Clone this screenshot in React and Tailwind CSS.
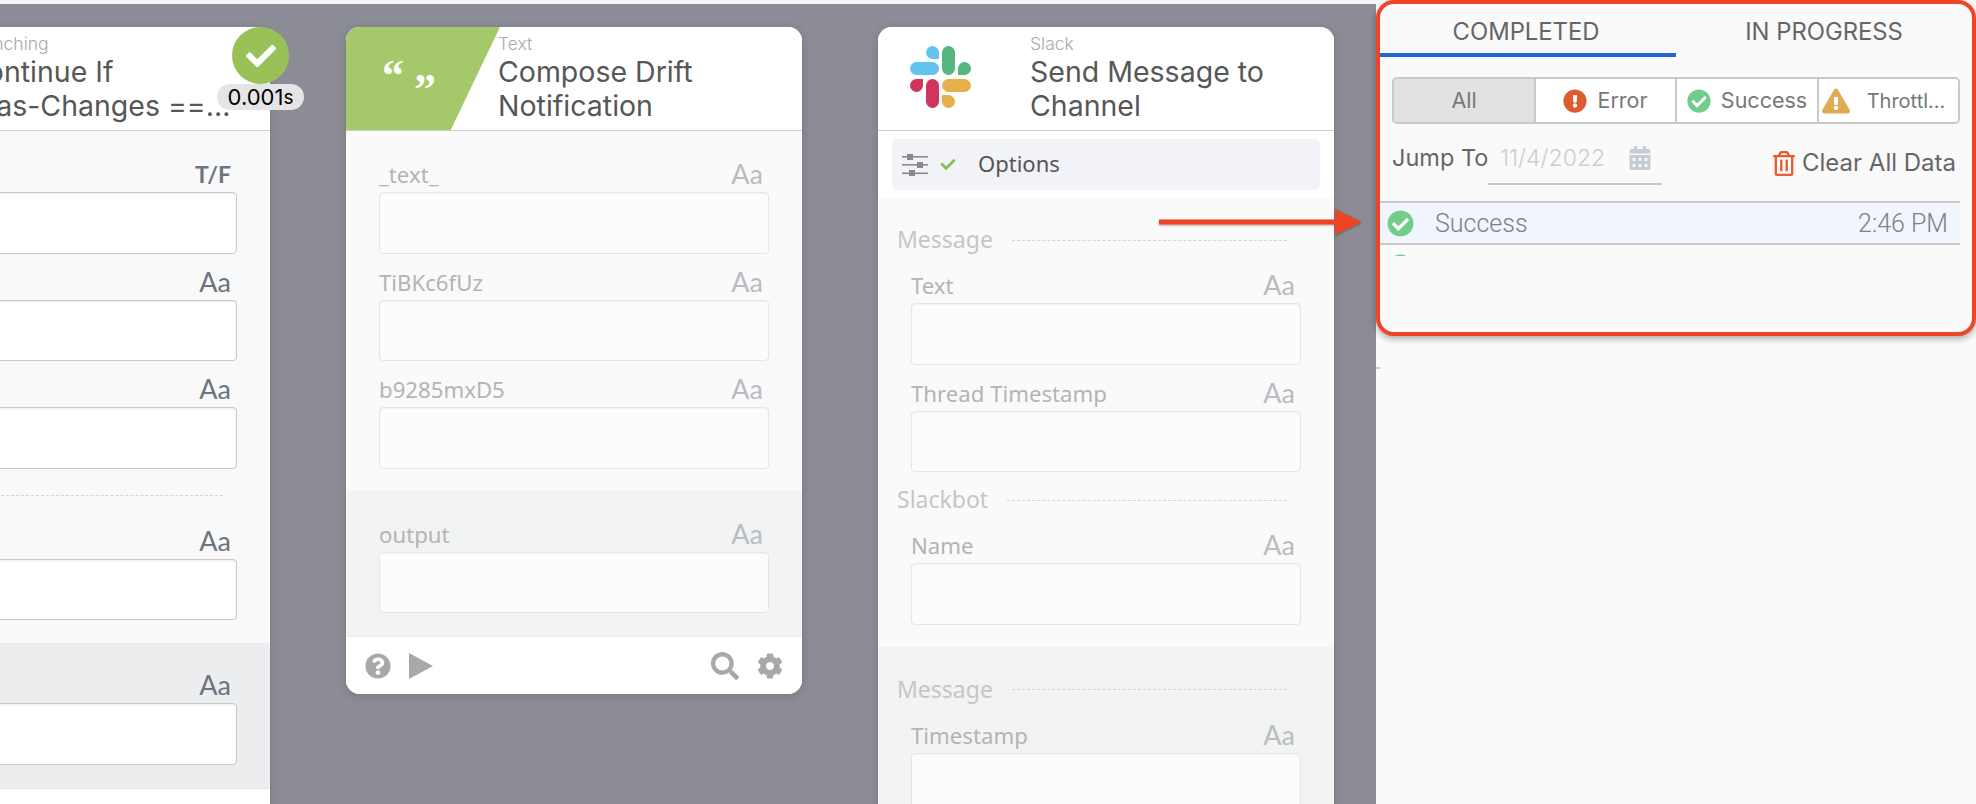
import React from 'react';
import { FaCheck, FaCog, FaQuestionCircle, FaSearch, FaCalendarAlt, FaRegTrashAlt, FaCheckCircle, FaExclamationCircle, FaExclamationTriangle } from 'react-icons/fa';

function Field({ label, type = 'Aa', faded }) {
  return (
    <div className="px-[33px]">
      <div className="h-[46px] flex items-end justify-between pb-[4px] pr-[6px]">
        <span className={faded ? "mb-[1px] font-['Noto_Sans'] text-[22.2px] leading-[24px] text-[#b4b4b4]" : "mb-[1px] font-['Noto_Sans'] text-[22.2px] leading-[24px] text-[#6b7580]"}>{label}</span>
        {type === 'Aa' ? (
          <span className={faded ? "font-['Lato'] text-[27px] leading-[28px] text-[#b9bcc2]" : "font-['Lato'] text-[27px] leading-[28px] text-[#6b7580]"}>Aa</span>
        ) : (
          <span className="font-['Lato'] font-bold text-[23px] leading-[28px] text-[#6b7580]">{type}</span>
        )}
      </div>
      <div className={faded
        ? 'h-[61.5px] rounded-[4px] border border-[#e6e6e6] bg-[#fcfcfc] shadow-[inset_0_1px_2px_rgba(0,0,0,0.04)]'
        : 'h-[61.5px] rounded-[4px] border border-[#c8c8c8] bg-white shadow-[inset_0_1px_2px_rgba(0,0,0,0.08)]'} />
    </div>
  );
}

function SectionHead({ label, className }) {
  return (
    <div className={`h-[34px] flex items-center pl-[19px] pr-[47px] gap-[19px] ${className}`}>
      <span className="-mt-[2px] font-['Noto_Sans'] text-[23px] leading-[30px] text-[#c6c6c6]">{label}</span>
      <div className="flex-1 border-t border-dashed border-[#d4d4d4]" />
    </div>
  );
}

function NodeHeader({ icon, category, title }) {
  return (
    <div className="h-[104px] flex border-b border-[#cfcfcf] bg-white shrink-0">
      <div className="w-[152px] h-full shrink-0">{icon}</div>
      <div className="pt-[7px] min-w-0">
        <div className="text-[17.5px] leading-[20px] font-light text-[#a9a9a9]">{category}</div>
        <div className="mt-[1px] text-[28.5px] leading-[34px] text-[#575757] whitespace-pre">{title}</div>
      </div>
    </div>
  );
}

function SlackLogo() {
  return (
    <svg viewBox="0 0 61 62" className="w-[61px] h-[62px] ml-[32px] mt-[19px]">
      <path d="M22.5 0a6.5 6.5 0 0 0 0 13H29V6.5A6.5 6.5 0 0 0 22.5 0z" fill="#62c3ec" />
      <rect x="0" y="16" width="29" height="13" rx="6.5" fill="#62c3ec" />
      <rect x="32" y="0" width="13" height="29" rx="6.5" fill="#57b582" />
      <path d="M54.5 16a6.5 6.5 0 0 1 0 13H48v-6.5a6.5 6.5 0 0 1 6.5-6.5z" fill="#57b582" />
      <path d="M6.5 33H13v6.5a6.5 6.5 0 0 1-13 0A6.5 6.5 0 0 1 6.5 33z" fill="#cf355d" />
      <rect x="16" y="33" width="13" height="29" rx="6.5" fill="#cf355d" />
      <rect x="32" y="33" width="29" height="13" rx="6.5" fill="#e6b14a" />
      <path d="M32 49h6.5a6.5 6.5 0 0 1 0 13A6.5 6.5 0 0 1 32 55.5z" fill="#e6b14a" />
    </svg>
  );
}

function SlidersIcon() {
  return (
    <svg viewBox="0 0 26 22" className="w-[26px] h-[22px]" fill="#8a8a8a">
      <rect x="0" y="2" width="26" height="1.6" />
      <rect x="5" y="0" width="6" height="6" />
      <rect x="0" y="10" width="26" height="1.6" />
      <rect x="15" y="8" width="6" height="6" />
      <rect x="0" y="18.5" width="26" height="1.6" />
      <rect x="7" y="16" width="6" height="6" />
    </svg>
  );
}

function BranchCard() {
  return (
    <div className="w-[456px] -ml-[186px] shrink-0 rounded-t-[14px] overflow-hidden bg-[#f9f9f9] shadow-[0_2px_10px_rgba(0,0,0,0.15)]">
      <NodeHeader
        category="Branching"
        title={<>Continue If{'\n'}<span className="ml-[9px]">Has-Changes ==...</span></>}
      />
      <div className="pt-[15px] pb-[23px]">
        <Field type="T/F" />
        <Field />
        <Field />
        <SectionHead className="mt-[10px]" />
        <Field />
      </div>
      <div className="bg-[#ecedef] pt-[14px] pb-[23px] border-b border-[#e6e6e6]">
        <Field />
      </div>
      <div className="h-[60px] bg-white" />
    </div>
  );
}

function TextCard() {
  return (
    <div className="w-[456px] self-start shrink-0 rounded-[14px] overflow-hidden bg-[#fafafa] shadow-[0_2px_10px_rgba(0,0,0,0.15)]">
      <NodeHeader
        category="Text"
        title={'Compose Drift\nNotification'}
        icon={
          <div className="w-[154px] h-full bg-[#a5c86a] [clip-path:polygon(0_0,100%_0,68%_100%,0_100%)] flex text-white font-['Liberation_Serif'] font-bold text-[44px] leading-[44px] pl-[36px] gap-[10px] pt-[27px]">
            <span>“</span>
            <span className="mt-[14px]">”</span>
          </div>
        }
      />
      <div className="pt-[15px] pb-[22px]">
        <Field faded label="_text_" />
        <Field faded label="TiBKc6fUz" />
        <Field faded label="b9285mxD5" />
      </div>
      <div className="bg-[#f2f3f3] pt-[15px] pb-[23px] border-b border-[#ececec]">
        <Field faded label="output" />
      </div>
      <div className="h-[57px] bg-white flex items-center px-[19px] text-[#a8a8a8]">
        <FaQuestionCircle className="w-[26px] h-[26px]" />
        <svg viewBox="0 0 24 26" className="w-[24px] h-[26px] ml-[18px]" fill="#a8a8a8"><polygon points="0,0 24,13 0,26" /></svg>
        <div className="flex-1" />
        <FaSearch className="w-[28px] h-[28px]" />
        <FaCog className="w-[26px] h-[26px] ml-[18px]" />
      </div>
    </div>
  );
}

function SlackCard() {
  return (
    <div className="w-[456px] shrink-0 rounded-t-[14px] overflow-hidden bg-[#fafafa] shadow-[0_2px_10px_rgba(0,0,0,0.15)]">
      <NodeHeader category="Slack" title={'Send Message to\nChannel'} icon={<SlackLogo />} />
      <div className="bg-white h-[67px] px-[14px] pt-[8px]">
        <div className="h-[51px] rounded-[5px] bg-[#f1f3f8] flex items-center pl-[10px]">
          <SlidersIcon />
          <FaCheck className="w-[18px] h-[15px] ml-[11px] text-[#8cc152]" />
          <span className="ml-[21px] -mt-[2px] font-['Noto_Sans'] text-[22px] text-[#555555]">Options</span>
        </div>
      </div>
      <div className="pt-[25px] pb-[22px]">
        <SectionHead label="Message" />
        <Field faded label="Text" />
        <Field faded label="Thread Timestamp" />
        <SectionHead label="Slackbot" className="mt-[11px]" />
        <Field faded label="Name" />
      </div>
      <div className="bg-[#f2f3f3] pt-[26px] pb-[23px]">
        <SectionHead label="Message" />
        <Field faded label="Timestamp" />
      </div>
    </div>
  );
}

function FilterButton({ icon, label, active, className }) {
  return (
    <div className={`flex items-center justify-center gap-[10px] text-[21.5px] text-[#777777] ${active ? 'bg-[#e2e2e2]' : 'bg-white'} ${className}`}>
      {icon}
      <span>{label}</span>
    </div>
  );
}

function ActivityRow({ active }) {
  return (
    <div className={active
      ? 'h-[44px] flex items-center border-y-2 border-[#c9c9c9] bg-[#f1f5fe]'
      : 'h-[44px] flex items-center'}>
      <FaCheckCircle className="w-[27px] h-[27px] ml-[7px] mt-[1px] text-[#72cc8b] bg-white rounded-full" />
      <span className="ml-[21px] mt-[2px] font-['Roboto'] font-light text-[25px] text-[#808080]">Success</span>
      <span className="ml-auto mr-[12px] mt-[2px] font-['Roboto'] font-light text-[25px] text-[#808080]">2:46 PM</span>
    </div>
  );
}

function RunsPanel() {
  return (
    <div className="h-[336px] rounded-[18px] border-4 border-[#ee4426] bg-[#fafafa] shadow-[0_3px_6px_rgba(0,0,0,0.3)]">
      <div className="flex h-[53px] text-[23.8px] text-[#666666]">
        <div className="w-[296px] pt-[10px] pr-[4px] text-center border-b-4 border-[#2463d6] h-[53px]">COMPLETED</div>
        <div className="w-[296px] pt-[10px] text-center h-[53px]">IN PROGRESS</div>
      </div>
      <div className="mx-[12px] mt-[20px] h-[47px] flex rounded-[5px] border-2 border-[#c9c9c9] overflow-hidden">
        <FilterButton label="All" active className="w-[142px] border-r-2 border-[#c9c9c9]" />
        <FilterButton label="Error" icon={<FaExclamationCircle className="w-[24px] h-[24px] text-[#e05a30]" />} className="w-[141px] border-r-2 border-[#c9c9c9]" />
        <FilterButton label="Success" icon={<FaCheckCircle className="w-[24px] h-[24px] text-[#72cc8b]" />} className="w-[142px] border-r-2 border-[#c9c9c9]" />
        <FilterButton
          label={<span className="text-[20px]">Throttl...</span>}
          icon={<FaExclamationTriangle className="w-[28px] h-[28px] mr-[7px] text-[#e0aa55]" />}
          className="flex-1 pr-[10px]"
        />
      </div>
      <div className="mx-[12px] mt-[17px] h-[44px] flex items-center">
        <span className="text-[23.5px] text-[#666666] w-[108px] -mt-[10px]">Jump To</span>
        <div className="w-[174px] h-[44px] -ml-[12px] flex items-center border-b-2 border-[#c2c8d0] pl-[12px]">
          <span className="text-[23px] font-light text-[#c9ced6] -mt-[8px]">11/4/2022</span>
          <FaCalendarAlt className="ml-[24px] w-[22px] h-[24px] text-[#c5ccd6] -mt-[8px]" />
        </div>
        <div className="ml-auto flex items-center gap-[7px] mr-[4px]">
          <FaRegTrashAlt className="w-[22px] h-[25px] text-[#e85a30]" />
          <span className="text-[24px] text-[#666666]">Clear All Data</span>
        </div>
      </div>
      <div className="mt-[16px] mr-[12px] h-[55px] overflow-hidden">
        <ActivityRow active />
        <ActivityRow />
      </div>
    </div>
  );
}

export default function App() {
  return (
    <div className="relative w-[1976px] h-[804px] overflow-hidden bg-[#fafafa] font-['Inter',sans-serif]">
      <div className="flex h-full">
        <div className="w-[1376px] shrink-0 overflow-hidden flex flex-col">
          <div className="h-[4px] bg-[#f5f5f5] shrink-0" />
          <div className="flex-1 bg-[#8c8c96] flex items-start gap-[76px] pt-[23px] overflow-hidden">
            <BranchCard />
            <TextCard />
            <SlackCard />
          </div>
        </div>
        <div className="flex-1">
          <RunsPanel />
          <div className="w-[4px] h-[2px] mt-[31px] bg-[#c8c8c8]" />
        </div>
      </div>

      {/* run status on the branching node */}
      <div className="absolute left-[232px] top-[27px] w-[57px] h-[57px] rounded-full bg-[#99c158] flex items-center justify-center">
        <FaCheck className="w-[36px] h-[30px] text-white" />
      </div>
      <div className="absolute left-[217px] top-[84px] w-[87px] h-[26px] rounded-full bg-[#e5e5e5] flex items-center justify-center text-black text-[22px] leading-none">
        0.001<span className="text-[19px]">s</span>
      </div>

      {/* annotation arrow */}
      <svg className="absolute left-[1155px] top-[205px] drop-shadow-[0_1px_1px_rgba(0,0,0,0.3)]" width="210" height="34" viewBox="0 0 210 34">
        <rect x="4" y="14.5" width="180" height="5" fill="#ee4426" />
        <polygon points="180,4 207,17 180,30" fill="#ee4426" />
      </svg>
    </div>
  );
}
